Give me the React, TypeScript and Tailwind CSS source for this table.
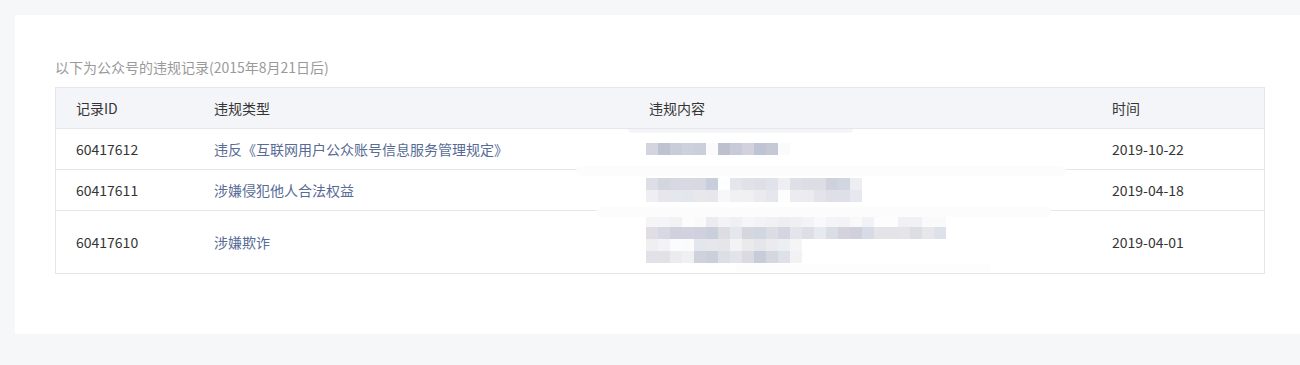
import React from 'react';

type Row = {
  id: string;
  type: string;
  date: string;
  mosaic: string[][];
  tall?: boolean;
};

const rows: Row[] = [
  {
    id: '60417612',
    type: '违反《互联网用户公众账号信息服务管理规定》',
    date: '2019-10-22',
    mosaic: [
      ['#d3d4de', '#bec3d2', '#c9ccd9', '#cdd1dd', '#cbcfdc', '#fbfbfc', '#bfc0cf', '#c7cbd9', '#d2d1dc', '#bfc4d5', '#c5c9d6', '#fafbfd'],
    ],
  },
  {
    id: '60417611',
    type: '涉嫌侵犯他人合法权益',
    date: '2019-04-18',
    mosaic: [
      ['#dedfe6', '#d3d5df', '#d6d8e2', '#d8dae3', '#d6d8e2', '#c9cddc', '#fdfeff', '#e5e5eb', '#e1e2e8', '#dfdfe6', '#e1e3ec', '#efeff3', '#dfe0e7', '#dcdde5', '#dddde4', '#cfd1dd', '#d2d6e2', '#eeeef2'],
      ['#efeff3', '#e6e6ec', '#e5e7ee', '#e4e6ee', '#e8e7ec', '#e6e6ec', '#f7f7f9', '#f1f1f4', '#f0f0f3', '#ebebef', '#e6e7ee', '#fdfdfe', '#ebebf0', '#ebebf0', '#e3e3e9', '#dfe0e7', '#dde0e9', '#e6e7ef'],
    ],
  },
  {
    id: '60417610',
    type: '涉嫌欺诈',
    date: '2019-04-01',
    tall: true,
    mosaic: [
      ['#f5f5f7', '#f5f5f7', '#f2f2f4', '#fcfcfd', '#fafafb', '#ececf0', '#f3f3f5', '#eff0f3', '#f6f6f8', '#f3f3f6', '#f1f1f4', '#eeeef2', '#f0f0f3', '#f3f3f5', '#f9f9fb', '#f4f4f6', '#f3f3f5', '#f9f9f9', '#f1f2f5', '#fdfdfd', '#fdfdfd', '#f1f1f4', '#f0f1f4', '#fafafb', '#fafafb'],
      ['#e0dee4', '#d6d9e3', '#cfd1dc', '#d0d3df', '#cfd2de', '#cbcfdc', '#dddce2', '#e5e7ee', '#d6d6de', '#d2d6e0', '#dcdde4', '#d3d6e0', '#e4e4ec', '#dcdfe5', '#e6e9ee', '#dadde3', '#d4d3dd', '#cfd0dc', '#d7dbe6', '#e4e4e8', '#e4e4e8', '#e5e5e9', '#dddde4', '#e6e6eb', '#dde2ea'],
      ['#efeef1', '#f3f3f5', '#fbfcfd', '#fbfbfb', '#e4e6ed', '#e6e7ed', '#e6e6ea', '#f3f3f5', '#eaeaed', '#e4e6ec', '#ebeaee', '#ebeff1', '#f5f5f6'],
      ['#e2e1e7', '#e1e1e6', '#ececef', '#f0f0f2', '#cfd2dd', '#cbcfdb', '#dddfe6', '#e3e3e9', '#dadae1', '#c8ccd8', '#d4d6e0', '#dfe1e8', '#f2f2f4'],
    ],
  },
];

const Mosaic: React.FC<{ lines: string[][] }> = ({ lines }) => (
  <div className="flex flex-col">
    {lines.map((line, i) => (
      <div key={i} className="flex h-3">
        {line.map((c, j) => (
          <div key={j} className="w-3 h-3" style={{ backgroundColor: c }} />
        ))}
      </div>
    ))}
  </div>
);

const cols = 'grid grid-cols-[138px_435px_463px_1fr]';

export default function App() {
  return (
    <div
      className="h-[365px] bg-[#f6f7f9] pt-[15px] pl-[15px] overflow-hidden"
      style={{ fontFamily: '"Noto Sans CJK SC", "Noto Sans", sans-serif' }}
    >
      <div className="bg-white pt-[42px] pl-10 pb-[60px] text-sm">
        <p className="leading-5 text-[#9a9a9a] mb-[10px]">以下为公众号的违规记录(2015年8月21日后)</p>

        <div className="relative w-[1210px] border border-[#e7e7eb] text-[#353535]">
          {/* Header */}
          <div className={`${cols} h-[41px] items-center bg-[#f4f5f9] border-b border-[#e7e7eb]`}>
            <div className="px-5">记录ID</div>
            <div className="px-5">违规类型</div>
            <div className="px-5">违规内容</div>
            <div className="px-5">时间</div>
          </div>

          {rows.map((r, i) => (
            <div
              key={r.id}
              className={`${cols} items-center ${r.tall ? 'h-[62px]' : 'h-[41px]'} ${i < rows.length - 1 ? 'border-b border-[#e7e7eb]' : ''}`}
            >
              <div className="px-5">{r.id}</div>
              <div className="px-5 text-[#576b95]">{r.type}</div>
              <div className={`px-[17px] ${r.tall ? 'self-start pt-1' : ''}`}>
                <Mosaic lines={r.mosaic} />
              </div>
              <div className="px-5">{r.date}</div>
            </div>
          ))}

          {/* smudged edges of the blurred content */}
          <div className="absolute top-[41px] left-[572px] w-[225px] h-[4px] bg-[#f4f5f9] rounded-b-full" />
          <div className="absolute top-[78px] left-[520px] w-[490px] h-[10px] bg-[#fcfcfc] rounded-full" />
          <div className="absolute top-[119px] left-[540px] w-[455px] h-[10px] bg-[#fcfcfc] rounded-full" />
          <div className="absolute top-[176px] left-[680px] w-[255px] h-[9px] bg-[#fdfdfd] rounded-full" />
        </div>
      </div>
    </div>
  );
}
